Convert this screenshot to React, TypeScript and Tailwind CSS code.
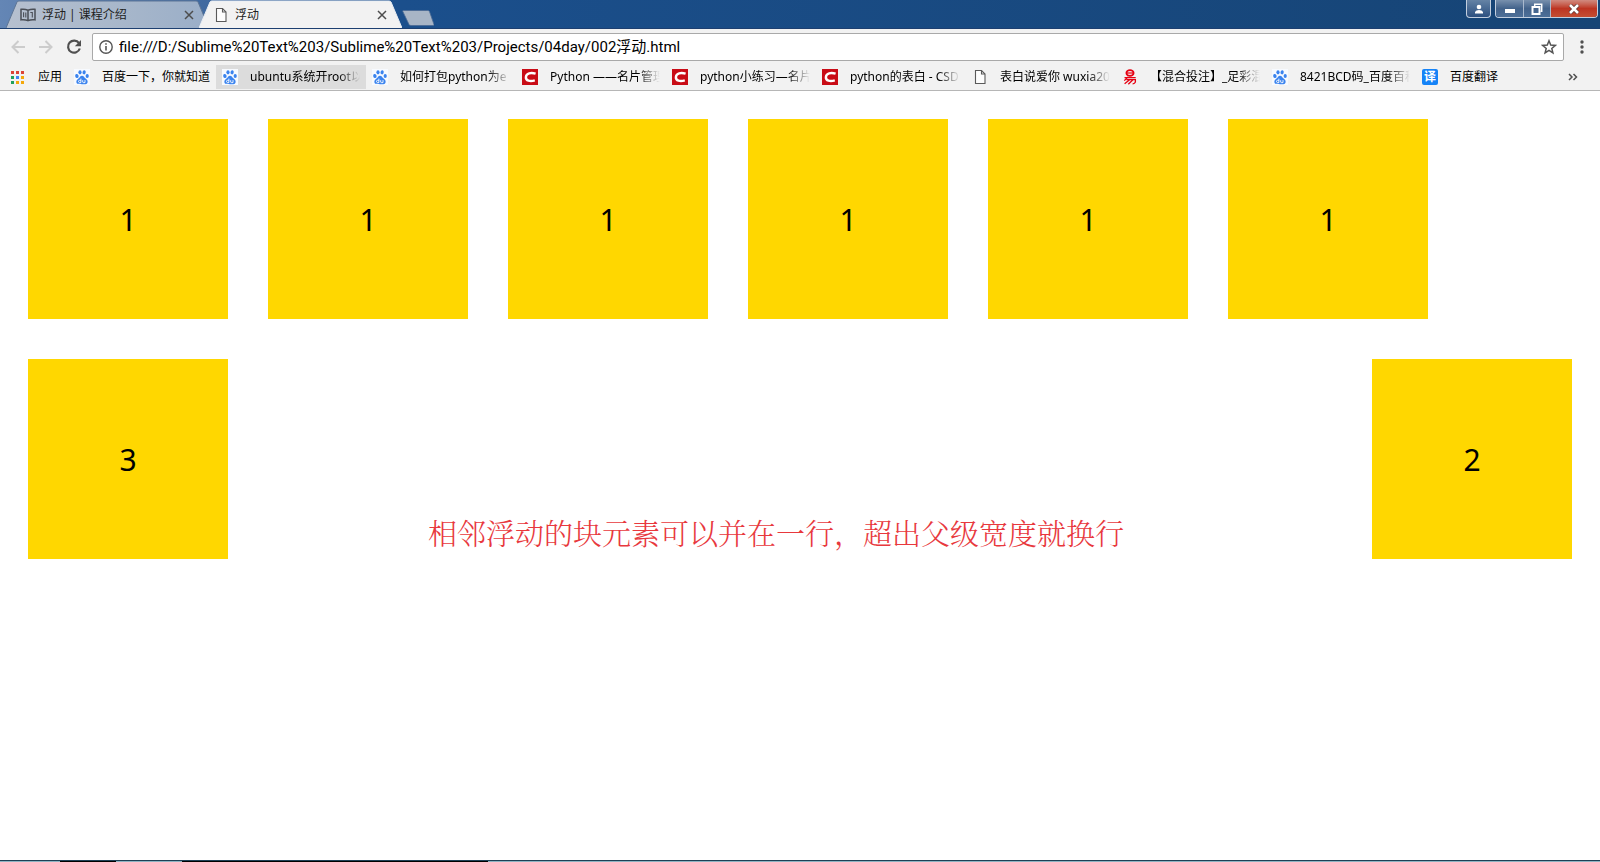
import React from "react";

type IconKind = "paw" | "csdn" | "page" | "yi" | "translate";

const ui = "font-['Noto_Sans','Noto_Sans_CJK_SC',sans-serif]";

function PageIcon() {
  return (
    <svg viewBox="0 0 16 16" className="size-4 shrink-0" fill="none" stroke="#5a5a5a" strokeWidth="1.1">
      <path d="M3.5 1.5h6l3.5 3.5v9.5h-9.5z" fill="#fdfdfd" />
      <path d="M9.5 1.5v3.5h3.5" />
    </svg>
  );
}

function PawIcon() {
  return (
    <svg viewBox="0 0 16 16" className="size-4 shrink-0">
      <rect width="16" height="16" fill="#f7faff" />
      <g fill="#3a83ee">
        <ellipse cx="2.9" cy="7" rx="1.7" ry="2.1" transform="rotate(-15 2.9 7)" />
        <ellipse cx="6" cy="3.3" rx="1.6" ry="2.1" />
        <ellipse cx="10.1" cy="3.3" rx="1.6" ry="2.1" transform="rotate(12 10.1 3.3)" />
        <ellipse cx="13.2" cy="7" rx="1.6" ry="2" />
        <path d="M8 6.7c1.8 0 2.3 1.7 3.6 2.9 1.2 1 2.3 1.9 2 3.6-.3 2-2.4 2.2-5.6 2s-5.2.2-5.6-1.9c-.3-1.8 1-2.7 2.1-3.7C5.8 8.5 6.2 6.7 8 6.7z" />
      </g>
      <path d="M6.9 9.6v3.9H5.6c-1.5 0-1.5-2.2 0-2.2h1.3M8.7 11.2v1.8q0 .6.7.6h1.6v-2.5" fill="none" stroke="#fff" strokeWidth=".9" />
    </svg>
  );
}

function BookmarkIcon({ kind }: { kind: IconKind }) {
  if (kind === "paw") return <PawIcon />;
  if (kind === "page") return <PageIcon />;
  if (kind === "csdn")
    return (
      <svg viewBox="0 0 16 16" className="size-4 shrink-0">
        <rect width="16" height="16" fill="#c90c16" />
        <path d="M13.6 4.6C9 3.3 4.3 4 3.9 8c-.3 3.9 4.2 4.7 8.9 3.4" fill="none" stroke="#fff" strokeWidth="2.4" />
      </svg>
    );
  if (kind === "yi")
    return (
      <svg viewBox="0 0 16 16" className="size-4 shrink-0" fill="none" stroke="#e60012">
        <ellipse cx="8" cy="4" rx="3.6" ry="2.8" strokeWidth="1.8" />
        <path d="M5 4h6" strokeWidth="1.2" />
        <path d="M2.5 8.6h11.2M6 8L2.3 11.6M4.5 10.6h8.900q.5 4.200-2.800 4.200M7.600 10.800l-5 4M10.900 10.800l-4.600 4.500" strokeWidth="1.3" />
      </svg>
    );
  return (
    <span className="flex size-4 shrink-0 items-center justify-center rounded-xs bg-[#1583f7] text-xs font-bold leading-4 text-white">
      译
    </span>
  );
}

const bookmarks: { kind: IconKind; label: string; fade?: boolean; active?: boolean }[] = [
  { kind: "paw", label: "百度一下，你就知道" },
  { kind: "paw", label: "ubuntu系统开root以", fade: true, active: true },
  { kind: "paw", label: "如何打包python为e", fade: true },
  { kind: "csdn", label: "Python ——名片管理", fade: true },
  { kind: "csdn", label: "python小练习—名片", fade: true },
  { kind: "csdn", label: "python的表白 - CSD", fade: true },
  { kind: "page", label: "表白说爱你 wuxia20", fade: true },
  { kind: "yi", label: "【混合投注】_足彩混", fade: true },
  { kind: "paw", label: "8421BCD码_百度百科", fade: true },
  { kind: "translate", label: "百度翻译" },
];

function Tab({ title, icon, active }: { title: string; icon: React.ReactNode; active?: boolean }) {
  return (
    <div className={"relative -ml-[10px] flex h-7 w-[203px] items-center pt-px pl-[14px] pr-[15px] " + (active ? "z-10" : "")}>
      <svg viewBox="0 0 203 28" preserveAspectRatio="none" className="absolute inset-0 size-full">
        <defs>
          <linearGradient id="idle" x1="0" x2="1">
            <stop offset="0" stopColor="#b6c0cf" />
            <stop offset=".5" stopColor="#a9b8cb" />
            <stop offset="1" stopColor="#9aaec8" />
          </linearGradient>
        </defs>
        <path d="M0 28L11 2Q11.5 1 13 1H190Q191.5 1 192 2L203 28" fill={active ? "#f2f2f2" : "url(#idle)"} stroke={active ? "#e8edf3" : "#5d7595"} />
      </svg>
      <button type="button" className="relative flex min-w-0 flex-1 items-center gap-[6px] text-left text-xs text-[#222]">
        {icon}
        <span>{title}</span>
      </button>
      <button type="button" aria-label="Close tab" className="relative">
        <svg viewBox="0 0 10 10" className="size-[10px]" stroke="#4d4d4d" strokeWidth="1.5">
          <path d="M1 1l8 8M9 1L1 9" />
        </svg>
      </button>
    </div>
  );
}

function Box({ n }: { n: number }) {
  return <div className="flex size-[200px] items-center justify-center bg-[#ffd700] text-[30px] text-black">{n}</div>;
}

export default function App() {
  return (
    <div className={"flex min-h-screen flex-col bg-white text-black " + ui}>
      <header className="bg-[#f2f2f2]">
        <div className="flex h-[29px] items-start justify-between border-b border-[#1d3f70] bg-linear-to-r from-[#6486b5] from-0% via-[#1b4f8c] via-25% to-[#164475]">
          <div className="flex pl-4">
            <Tab
              title="浮动 | 课程介绍"
              icon={
                <svg viewBox="0 0 16 14" className="h-[14px] w-4 shrink-0" fill="none" stroke="#4a4f57" strokeWidth="1.5">
                  <path d="M8 2.2Q5 .8 1 1.3V11.8q4-.6 7 .9 3-1.500 7-.9V1.300Q11 .8 8 2.200zV12.500" />
                  <path d="M3.600 4.200v5M5.800 4.500v5M10.300 4.500h2v5" strokeWidth="1.100" />
                </svg>
              }
            />
            <Tab title="浮动" active icon={<PageIcon />} />
            <button type="button" aria-label="New tab" className="mt-2">
              <svg viewBox="0 0 32 16" className="h-4 w-8">
                <path d="M1.500 .5H25.500q1.500 0 2 1l4.500 13q.3 1-1 1H9q-1.500 0-2-1L.8 1.500Q.5 .5 1.500 .5z" fill="#a8b5c6" stroke="#4a6a94" strokeWidth=".8" />
              </svg>
            </button>
          </div>
          <div className="flex gap-1 pr-[2px]">
            <button type="button" aria-label="Profile" className="flex h-[18px] w-[25px] items-center justify-center rounded-b border border-t-0 border-[#c3cfdf] bg-linear-to-b from-[#6583a5] to-[#2c5080]">
              <svg viewBox="0 0 10 10" className="size-[10px]" fill="#fff">
                <circle cx="5" cy="3" r="2.3" />
                <path d="M1 9.500V8q1-2 4-2t4 2v1.500z" />
              </svg>
            </button>
            <div className="flex h-[18px] overflow-hidden rounded-b border border-t-0 border-[#c3cfdf]">
              <button type="button" aria-label="Minimize" className="flex w-7 items-center justify-center border-r border-[#a9b9cd] bg-linear-to-b from-[#7890ad] via-[#43638b] via-50% to-[#4d6f98]">
                <span className="mt-1 h-1 w-[10px] bg-white" />
              </button>
              <button type="button" aria-label="Restore" className="flex w-[27px] items-center justify-center border-r border-[#a9b9cd] bg-linear-to-b from-[#7890ad] via-[#43638b] via-50% to-[#4d6f98]">
                <svg viewBox="0 0 12 12" className="size-3" fill="none" stroke="#fff" strokeWidth="1.5">
                  <path d="M3.700 3V1.300h7v7H9.500" />
                  <path d="M1.500 4h7v7h-7z" strokeWidth="2" />
                </svg>
              </button>
              <button type="button" aria-label="Close" className="flex w-[46px] items-center justify-center bg-linear-to-b from-[#d08a80] via-[#bd3422] via-50% to-[#c44d32]">
                <svg viewBox="0 0 12 10" className="h-[10px] w-3" fill="none">
                  <path d="M2 1l8 8M10 1L2 9" stroke="#56302f" strokeWidth="4" />
                  <path d="M2 1l8 8M10 1L2 9" stroke="#fff" strokeWidth="2.600" />
                </svg>
              </button>
            </div>
          </div>
        </div>

        <div className="flex items-center pt-1">
          <div className="flex w-[92px] items-center gap-3 pl-[10px]">
            <button type="button" aria-label="Back">
              <svg viewBox="0 0 16 16" className="size-4" fill="none" stroke="#ccc" strokeWidth="2">
                <path d="M15 8H2.500M8.500 2l-6 6 6 6" />
              </svg>
            </button>
            <button type="button" aria-label="Forward">
              <svg viewBox="0 0 16 16" className="size-4" fill="none" stroke="#ccc" strokeWidth="2">
                <path d="M1 8h12.500M7.500 2l6 6-6 6" />
              </svg>
            </button>
            <button type="button" aria-label="Reload">
              <svg viewBox="0 0 16 16" className="size-4" fill="none" stroke="#505050" strokeWidth="2.200">
                <path d="M13 4.200A6 6 0 1 0 13.800 9.500" />
                <path d="M15 1v6.200H8.800z" fill="#505050" stroke="none" />
              </svg>
            </button>
          </div>
          <div className="flex h-7 flex-1 items-center gap-[6px] rounded-xs border border-[#a9a9a9] bg-white px-[6px]">
            <svg viewBox="0 0 14 14" className="size-[14px] shrink-0" fill="none" stroke="#555" strokeWidth="1.4">
              <circle cx="7" cy="7" r="6.200" />
              <path d="M7 6v4.500M7 3.300v1.500" strokeWidth="1.600" />
            </svg>
            <input
              aria-label="Address"
              defaultValue="file:///D:/Sublime%20Text%203/Sublime%20Text%203/Projects/04day/002浮动.html"
              className="min-w-0 flex-1 bg-transparent font-[Roboto,'Noto_Sans_CJK_SC',sans-serif] text-[15px] outline-none"
            />
            <button type="button" aria-label="Bookmark this page">
              <svg viewBox="0 0 16 16" className="size-4" fill="none" stroke="#555" strokeWidth="1.5">
                <path d="M8 1.800l1.700 4.300 4.600.3-3.500 3 1.100 4.500L8 11.400l-3.900 2.500 1.100-4.500-3.500-3 4.600-.3z" />
              </svg>
            </button>
          </div>
          <button type="button" aria-label="Menu" className="flex w-9 justify-center">
            <svg viewBox="0 0 4 14" className="h-[14px] w-1" fill="#505050">
              <circle cx="2" cy="2" r="1.700" />
              <circle cx="2" cy="7" r="1.700" />
              <circle cx="2" cy="12" r="1.700" />
            </svg>
          </button>
        </div>

        <nav className="flex items-center border-b border-[#b6b6b6] pt-1 pb-px text-xs">
          <a href="#apps" className="flex h-6 w-[68px] shrink-0 items-center gap-[14px] pl-[10px]">
            <svg viewBox="0 0 14 14" className="size-[14px] shrink-0">
              <path d="M1 1h3v3H1zM6 1h3v3H6zM11 1h3v3h-3z" fill="#dc4437" />
              <path d="M1 6h3v3H1zM1 11h3v3H1z" fill="#1fa05c" />
              <path d="M6 6h3v3H6z" fill="#4285f4" />
              <path d="M11 6h3v3h-3zM6 11h3v3H6zM11 11h3v3h-3z" fill="#f4a80b" />
            </svg>
            应用
          </a>
          <div className="flex min-w-0 flex-1">
            {bookmarks.map((b) => (
              <a
                key={b.label}
                href="#bookmark"
                className={
                  "flex h-6 items-center gap-3 px-[6px] " +
                  (b.kind === "paw" && !b.fade ? "w-[148px] " : "w-[150px] ") +
                  (b.active ? "bg-[#dcdcdc]" : "")
                }
              >
                <BookmarkIcon kind={b.kind} />
                <span
                  className={
                    "min-w-0 flex-1 overflow-hidden whitespace-nowrap " +
                    (b.fade ? "[mask-image:linear-gradient(to_right,black_80%,transparent)]" : "")
                  }
                >
                  {b.label}
                </span>
              </a>
            ))}
          </div>
          <button type="button" aria-label="More bookmarks" className="pr-[22px]">
            <svg viewBox="0 0 10 8" className="h-2 w-[10px]" fill="none" stroke="#505050" strokeWidth="1.5">
              <path d="M1 1l3 3-3 3M5.500 1l3 3-3 3" />
            </svg>
          </button>
        </nav>
      </header>

      <main className="flex-1 p-7">
        <div className="flex flex-wrap gap-10">
          {[1, 1, 1, 1, 1, 1].map((n, i) => (
            <Box key={i} n={n} />
          ))}
        </div>
        <div className="mt-10 flex items-end justify-between">
          <Box n={3} />
          <p className="mr-12 pb-[6px] font-['Noto_Serif_CJK_SC','Noto_Sans_CJK_SC',serif] text-[29px] font-light leading-10 text-[#e8383d]">
            相邻浮动的块元素可以并在一行，超出父级宽度就换行
          </p>
          <Box n={2} />
        </div>
      </main>
      <footer className="flex h-[2px] border-t border-[#1d4056] bg-[#8fb3c2] pl-[60px]">
        <span className="mr-[66px] w-14 bg-black" />
        <span className="w-[306px] bg-black" />
      </footer>
    </div>
  );
}
